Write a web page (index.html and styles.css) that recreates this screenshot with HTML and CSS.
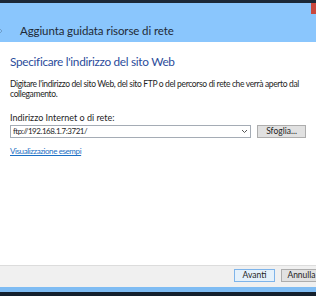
FILE: index.html
```html
<!DOCTYPE html>
<html>
<head>
  <title>Aggiunta guidata risorse di rete</title>
  <meta charset="UTF-8">
  <link rel="stylesheet" href="styles.css">
</head>
<body>
  <div class="window">
    <div class="topbar"></div>

    <div class="header">
      <svg class="back" width="4" height="8" viewBox="0 0 4 8">
        <path d="M-1 1 L2 4 L-1 7" fill="none" stroke="#6f9fcc" stroke-width="1"/>
      </svg>
      <div class="wizard-title">Aggiunta guidata risorse di rete</div>
      <div class="close"></div>
    </div>

    <div class="content">
      <h1>Specificare l'indirizzo del sito Web</h1>
      <p class="intro">Digitare l'indirizzo del sito Web, del sito FTP o del percorso di rete che verrà aperto dal collegamento.</p>

      <label class="field-label" for="address">Indirizzo Internet o di rete:</label>
      <div class="field-row">
        <div class="combo">
          <input type="text" id="address" value="ftp://192.168.1.7:3721/">
          <svg class="chevron" width="7" height="5" viewBox="0 0 7 5">
            <path d="M1 1 L3.5 3.5 L6 1" fill="none" stroke="#555" stroke-width="1"/>
          </svg>
        </div>
        <button class="btn browse">Sfoglia...</button>
      </div>

      <a class="examples" href="#">Visualizzazione esempi</a>
    </div>

    <div class="footer">
      <button class="btn primary">Avanti</button>
      <button class="btn">Annulla</button>
    </div>

    <div class="taskbar-edge"></div>
    <div class="taskbar"></div>
  </div>
</body>
</html>
```

FILE: styles.css
```css
body {
  margin: 0;
  font-family: Lato, 'Noto Sans', sans-serif;
  background-color: #ffffff;
  overflow: hidden;
}

.window {
  display: flex;
  flex-direction: column;
  height: 296px;
  width: 316px;
}

.topbar {
  height: 3px;
  background-color: #1b2838;
}

.header {
  display: flex;
  align-items: flex-start;
  height: 39px;
  background-color: #8ac6fd;
}

.back {
  margin-top: 24px;
  margin-right: 16px;
}

.wizard-title {
  margin-top: 21px;
  font-size: 11.5px;
  letter-spacing: -0.1px;
  line-height: 14px;
  color: #1f2a36;
}

.close {
  margin-left: auto;
  width: 5px;
  height: 11px;
  background-color: #c9483e;
}

.content {
  flex: 1;
  padding: 12px 10px 0 10px;
  color: #1e1e1e;
}

h1 {
  margin: 0 0 9px 0;
  font-size: 11.8px;
  letter-spacing: -0.3px;
  font-weight: normal;
  line-height: 16px;
  color: #2b4c9b;
}

.intro {
  margin: 0 -4px 14px 0;
  font-size: 8.5px;
  letter-spacing: -0.35px;
  line-height: 10px;
}

.field-label {
  display: block;
  font-size: 9px;
  line-height: 10px;
  margin-bottom: 2px;
}

.field-row {
  display: flex;
  align-items: center;
  gap: 6px;
}

.combo {
  display: flex;
  align-items: center;
  width: 242px;
  height: 13px;
  border: 1px solid #a5acb5;
  box-sizing: border-box;
  background-color: #ffffff;
}

.combo input {
  flex: 1;
  min-width: 0;
  border: none;
  outline: none;
  padding: 0 0 0 2px;
  font-family: Lato, 'Noto Sans', sans-serif;
  font-size: 8px;
  letter-spacing: -0.45px;
  line-height: 11px;
  height: 11px;
  color: #1e1e1e;
  background: transparent;
}

.chevron {
  margin-right: 2px;
}

.btn {
  font-family: Lato, 'Noto Sans', sans-serif;
  font-size: 8.5px;
  line-height: 11px;
  padding: 0;
  height: 14px;
  width: 48px;
  border: 1px solid #adadad;
  background-color: #e1e1e1;
  color: #1e1e1e;
  box-sizing: border-box;
}

.btn.browse {
  width: 49px;
  height: 13px;
}

.examples {
  display: inline-block;
  margin-top: 5px;
  font-size: 8px;
  letter-spacing: -0.4px;
  line-height: 10px;
  color: #1a6fc4;
}

.footer {
  display: flex;
  justify-content: flex-end;
  align-items: flex-start;
  gap: 6px;
  height: 22px;
  padding-top: 3px;
  margin-right: -6px;
  box-sizing: border-box;
  border-top: 1px solid #dcdcdc;
  background-color: #f0f0f0;
}

.footer .btn {
  width: 41px;
  height: 13px;
}

.footer .btn.primary {
  border-color: #7eb4ea;
  background-color: #e5f1fb;
}

.taskbar-edge {
  height: 5px;
  background-color: #7fbcf3;
}

.taskbar {
  height: 4px;
  background-color: #14202e;
}
```
